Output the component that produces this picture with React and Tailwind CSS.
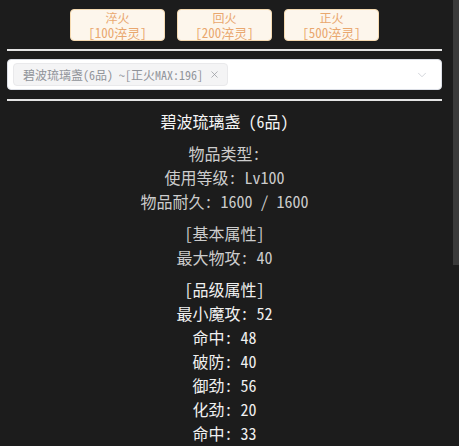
import { ChevronDown, X } from "lucide-react";

const serif = "font-['Noto_Sans_Mono_CJK_SC','Liberation_Serif','Noto_Sans_CJK_SC',serif]";

const buttons = [
  { name: "淬火", cost: "[100淬灵]" },
  { name: "回火", cost: "[200淬灵]" },
  { name: "正火", cost: "[500淬灵]" },
];

const baseInfo = ["物品类型:", "使用等级: Lv100", "物品耐久: 1600 / 1600"];
const gradeAttrs = ["最小魔攻: 52", "命中: 48", "破防: 40", "御劲: 56", "化劲: 20", "命中: 33"];

export default function App() {
  return (
    <div className={`flex h-[446px] w-full overflow-hidden bg-[#1c1c1c] ${serif}`}>
      <div className="w-[453px] shrink-0 pl-[7px] pr-[11px]">
        {/* refine buttons */}
        <div className="flex justify-center gap-[12px] pt-[9px]">
          {buttons.map((b) => (
            <button
              key={b.name}
              className="flex h-[32px] w-[95px] flex-col items-center justify-center rounded-[4px] border border-[#f5dab1] bg-[#fdf6ec] text-[12px] leading-[15px] text-[#e9a76e]"
            >
              <span>{b.name}</span>
              <span className="text-[13px]">{b.cost}</span>
            </button>
          ))}
        </div>

        <div className="mt-[8px] h-[2px] bg-[#e4e4e4]" />

        {/* item select */}
        <div className="mt-[8px] flex h-[31px] items-center rounded-[4px] border border-[#dcdfe6] bg-white pl-[5px] pr-[12px]">
          <div className="flex h-[23px] items-center gap-[6px] rounded-[4px] border border-[#e9e9eb] bg-[#f4f4f5] pl-[9px] pr-[7px] text-[12px] text-[#909399]">
            <span>碧波琉璃盏(6品) ~[正火MAX:196]</span>
            <X size={11} strokeWidth={1.5} />
          </div>
          <div className="flex-1" />
          <ChevronDown size={14} strokeWidth={1.2} className="text-[#c0c4cc]" />
        </div>

        <div className="mt-[9px] h-[2px] bg-[#e4e4e4]" />

        {/* item detail */}
        <div className="mt-[8px] flex flex-col items-center text-[16px] leading-[24px]">
          <div className="font-medium text-[#f5f5f5]">碧波琉璃盏 (6品)</div>

          <div className="mt-[8px] flex flex-col items-center text-[#cccccc]">
            {baseInfo.map((t) => (
              <div key={t}>{t}</div>
            ))}
          </div>

          <div className="mt-[8px] flex flex-col items-center text-[#cccccc]">
            <div>[基本属性]</div>
            <div>最大物攻: 40</div>
          </div>

          <div className="mt-[8px] flex flex-col items-center text-[#f0f0f0]">
            <div>[品级属性]</div>
            {gradeAttrs.map((t, i) => (
              <div key={i}>{t}</div>
            ))}
          </div>
        </div>
      </div>

      {/* scrollbar */}
      <div className="w-[6px] shrink-0">
        <div className="h-[265px] bg-[#3a3a3a]" />
      </div>
    </div>
  );
}
